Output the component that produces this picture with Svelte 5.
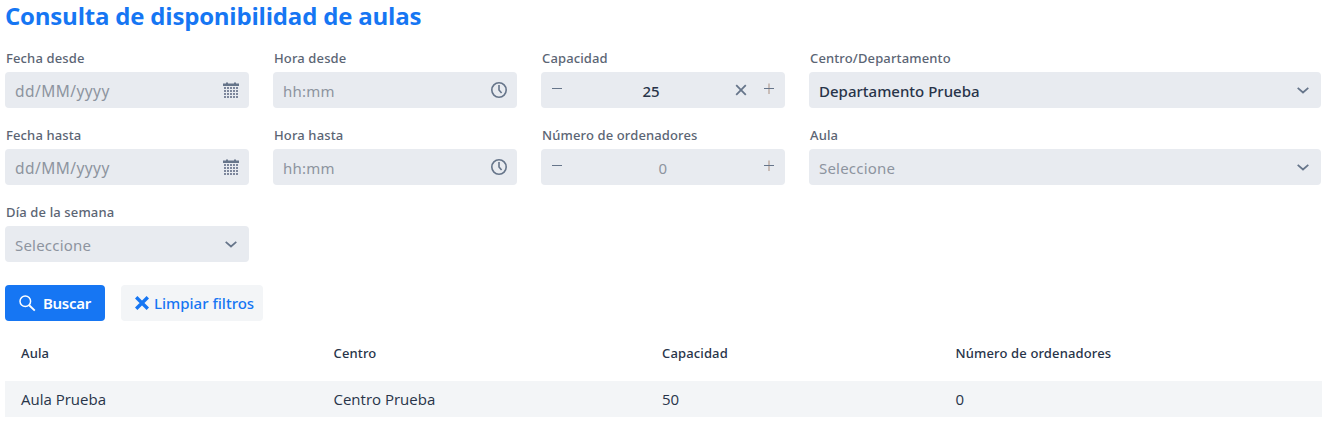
<script>
  const fields = [
    { label: 'Fecha desde', kind: 'date', text: 'dd/MM/yyyy' },
    { label: 'Hora desde', kind: 'time', text: 'hh:mm' },
    { label: 'Capacidad', kind: 'number', text: '25', filled: true },
    { label: 'Centro/Departamento', kind: 'select', text: 'Departamento Prueba', filled: true },
    { label: 'Fecha hasta', kind: 'date', text: 'dd/MM/yyyy' },
    { label: 'Hora hasta', kind: 'time', text: 'hh:mm' },
    { label: 'Número de ordenadores', kind: 'number', text: '0' },
    { label: 'Aula', kind: 'select', text: 'Seleccione' },
    { label: 'Día de la semana', kind: 'select', text: 'Seleccione' }
  ];
  const columns = ['Aula', 'Centro', 'Capacidad', 'Número de ordenadores'];
  const rows = [['Aula Prueba', 'Centro Prueba', '50', '0']];
</script>

<main>
  <h2>Consulta de disponibilidad de aulas</h2>

  <form class="filters">
    {#each fields as f}
      <div class="field">
        <span class="label">{f.label}</span>
        <div class="box {f.kind}" class:filled={f.filled}>
          {#if f.kind === 'number'}
            <svg class="step" width="12" height="12" viewBox="0 0 12 12"><path d="M1 5.5h10" /></svg>
          {/if}
          <span class="value">{f.text}</span>
          {#if f.kind === 'number'}
            {#if f.filled}
              <svg class="clear" width="12" height="12" viewBox="0 0 12 12"><path d="M1.2 1.2l9.6 9.6M10.8 1.2l-9.6 9.6" /></svg>
            {/if}
            <svg class="step" width="12" height="12" viewBox="0 0 12 12"><path class="warm" d="M6 .5v10.5" /><path d="M1 5.5h10" /></svg>
          {:else if f.kind === 'date'}
            <svg class="calendar" width="16" height="17" viewBox="0 0 16 17">
              <path d="M0 1.5h3V.5h2v1h6v-1h2v1h3V4H0z" />
              <path class="grid" d="M2 5v12M5 5v12M8 5v12M11 5v12M14 5v12" />
            </svg>
          {:else if f.kind === 'time'}
            <svg class="clock" width="16" height="16" viewBox="0 0 16 16"><circle cx="8" cy="8" r="7.2" /><path d="M8 3v5l2.6 3" /></svg>
          {:else}
            <svg class="chevron" width="12" height="7" viewBox="0 0 12 7"><path d="M.7 .8L6 5.5 11.3 .8" /></svg>
          {/if}
        </div>
      </div>
    {/each}
  </form>

  <div class="actions">
    <button class="primary">
      <svg width="17" height="17" viewBox="0 0 17 17"><circle cx="6.3" cy="6.3" r="5.3" /><path class="handle" d="M10.2 10.2l5.6 5.4" /></svg>
      <span>Buscar</span>
    </button>
    <button class="secondary">
      <svg width="14" height="14" viewBox="0 0 14 14"><path d="M1.2 1.2l11.6 11.6M12.8 1.2L1.2 12.8" /></svg>
      <span>Limpiar filtros</span>
    </button>
  </div>

  <div class="table">
    <div class="row head">
      {#each columns as c}<span>{c}</span>{/each}
    </div>
    {#each rows as r}
      <div class="row body">
        {#each r as c}<span>{c}</span>{/each}
      </div>
    {/each}
  </div>
</main>

<style>
  :global(body) { background: #fff; }
  main {
    box-sizing: border-box;
    height: 432px;
    padding: 0 8px 0 5px;
    overflow: hidden;
    font-family: "Noto Sans", "Open Sans", sans-serif;
    color: #283449;
    white-space: nowrap;
  }
  h2 {
    margin: 0;
    height: 45px;
    line-height: 32px;
    font-family: "Open Sans", "Noto Sans", sans-serif;
    font-size: 24px;
    font-weight: 700;
    letter-spacing: -0.2px;
    color: #1676f3;
  }
  .filters {
    display: grid;
    grid-template-columns: 244px 244px 244px 512px;
    column-gap: 24px;
    row-gap: 14px;
  }
  .field { display: flex; flex-direction: column; height: 63px; }
  .label {
    height: 27px;
    padding-left: 1px;
    line-height: 27px;
    font-size: 13px;
    font-weight: 500;
    letter-spacing: 0.13px;
    color: #5b6574;
  }
  .box {
    box-sizing: border-box;
    display: flex;
    align-items: center;
    height: 36px;
    padding: 0 10px;
    border-radius: 4px;
    background: #e8ebf0;
    color: #8d949f;
    line-height: 36px;
    font-size: 15px;
  }
  .value { flex: 1; padding-top: 2px; letter-spacing: 0.2px; }
  .filled .value { color: #283449; font-weight: 500; letter-spacing: 0; }
  .date .value { font-size: 15.5px; letter-spacing: 0.45px; }
  svg { flex: none; fill: none; }
  .box svg { stroke: #66758a; }
  .number .value { text-align: center; }
  .number.filled .value { padding-left: 4px; }
  .step { margin-bottom: 3px; }
  .step .warm { stroke: #b9a59a; stroke-width: 1.3; }
  .clear { margin-right: 16px; }
  .box .clear { stroke-width: 1.8; }
  .box .calendar { fill: #66758a; stroke: none; }
  .box .calendar .grid { stroke: #7d879c; stroke-width: 2; stroke-dasharray: 2 1; }
  .box .clock { stroke-width: 1.6; }
  .select { padding-right: 12px; }
  .box .chevron { stroke-width: 1.7; }
  .actions { display: flex; gap: 16px; margin-top: 23px; }
  button {
    display: flex;
    align-items: center;
    height: 36px;
    padding: 0;
    border: 0;
    border-radius: 4px;
    font: 600 15px/36px "Noto Sans", "Open Sans", sans-serif;
    white-space: nowrap;
  }
  .primary { width: 100px; padding-left: 14px; gap: 7px; background: #1676f3; color: #fff; letter-spacing: -0.3px; }
  .primary svg { stroke: #fff; stroke-width: 1.5; }
  .primary .handle { stroke-width: 1.9; }
  .secondary { width: 142px; padding-left: 14px; gap: 5px; background: #f3f5f7; color: #1676f3; font-weight: 500; }
  .secondary svg { stroke: #1676f3; stroke-width: 3.4; }
  .table { margin-top: 8px; width: 1317px; }
  .row { display: grid; grid-template-columns: 312.5px 328.5px 293.5px 1fr; padding-left: 16px; }
  .head { height: 52px; line-height: 48px; font-size: 13px; font-weight: 500; letter-spacing: 0.14px; }
  .body { height: 36px; line-height: 37px; font-family: "Open Sans", "Noto Sans", sans-serif; font-size: 15px; background: #f3f5f7; }
</style>
